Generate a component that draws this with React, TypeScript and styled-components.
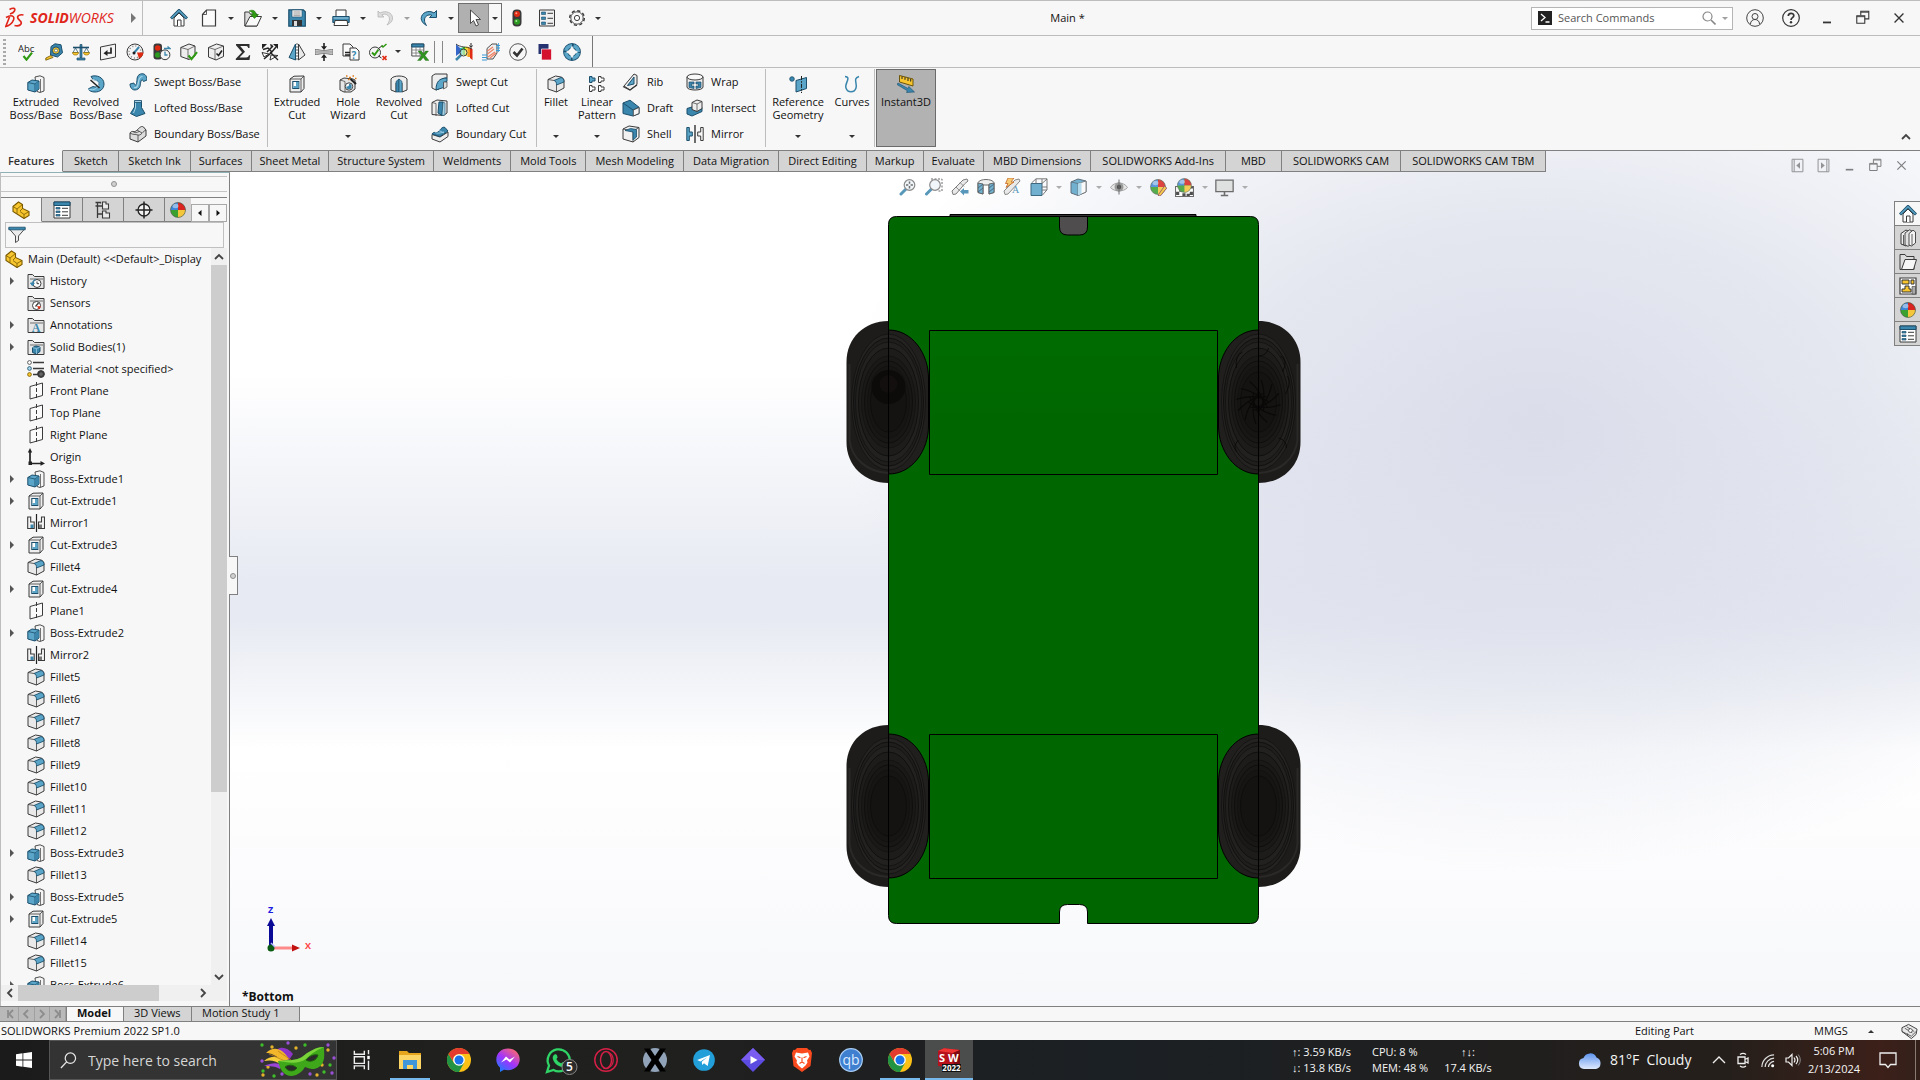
import React from 'react';
import styled, { createGlobalStyle, css } from 'styled-components';

/* ---------- palette ---------- */
const BL = '#5aa5c8';
const BM = '#3a86ad';
const BD = '#1c4f6c';
const BP = '#a8d4e8';
const K = '#3b3b3b';
const GN = '#2f9a12';
const YL = '#f7c52d';

const ui = `'Open Sans', 'Noto Sans', sans-serif`;

const Global = createGlobalStyle`
  * { box-sizing: border-box; }
  body { margin: 0; font: 11px/14px ${ui}; color: #111; background: #f7f7f7; overflow: hidden; }
  button, input { font: inherit; color: inherit; }
  button { border: 0; padding: 0; margin: 0; background: none; }
  ul { list-style: none; margin: 0; padding: 0; }
  h1 { font: inherit; margin: 0; }
`;

/* ---------- icon drawings, 18 x 18 ---------- */
const bigCheck = (x: number, y: number) => (
  <path d={`M${x} ${y} l3 3.6 l5.5 -7`} fill="none" stroke={GN} strokeWidth="2.2" />
);
const folderBack = (
  <>
    <path d="M1 16.500V2.500h4.500l2 2h9.500v12z" fill="#e6e6e6" stroke={K} />
    <path d="M3 7h13" stroke={K} strokeWidth=".7" />
  </>
);
const ball = (
  <>
    <circle cx="9" cy="9" r="7.500" fill="#3aa02f" />
    <path d="M9 9 V1.500 A7.500 7.500 0 0 0 1.500 9Z" fill="#3f86d8" />
    <path d="M9 9 V1.500 A7.500 7.500 0 0 1 16.500 9Z" fill="#d9241f" />
    <path d="M9 9 V16.500 A7.500 7.500 0 0 0 16.500 9Z" fill="#f3c63c" />
    <ellipse cx="6.500" cy="5" rx="3" ry="2.200" fill="#fff" opacity=".45" />
    <circle cx="9" cy="9" r="7.500" fill="none" stroke="#555" strokeWidth=".6" />
  </>
);
const glass = (dx = 0) => (
  <>
    <path d={`M${7 + dx} 11 L${2 + dx} 16`} stroke={BM} strokeWidth="3" strokeLinecap="round" />
    <circle cx={10.5 + dx} cy="7" r="5.300" fill="#eef5f9" stroke="#777" strokeWidth="1.200" />
  </>
);

const art: Record<string, React.ReactNode> = {
  home: (
    <>
      <path d="M4 9v8h10V9L9 4z" fill="#fff" stroke={K} />
      <path d="M7.500 17v-6h3.500v6" fill="#fff" stroke={K} />
      <path d="M1 9.500 9 1.500l8 8" fill="none" stroke={BD} strokeWidth="3" />
      <path d="M1.500 9 9 1.700 16.500 9" fill="none" stroke={BL} strokeWidth="1.200" />
    </>
  ),
  page: (
    <>
      <path d="M2.500 5.500 6.500 1h9v16h-13z" fill="#fbfbfb" stroke={K} strokeWidth="1.200" />
      <path d="M2.500 5.500h4V1" fill="none" stroke={K} strokeWidth=".8" />
    </>
  ),
  open: (
    <>
      <path d="M.8 17V3h4l1.500 2H13v12z" fill="#dcdcdc" stroke={K} />
      <path d="M1 17 6 7.500h11.500L13 17z" fill="#fafafa" stroke={K} />
      <path d="M5 2c4-2 7 0 7 3.500h2.500l-4 4-4-4H9c0-2-2-3-4-3.500z" fill={GN} stroke="#1b6b08" strokeWidth=".5" />
    </>
  ),
  save: (
    <>
      <path d="M.8.800h14.500l2 2v14.400H.8z" fill={BM} stroke={BD} strokeWidth="1.200" />
      <path d="M4 1h10v7H4z" fill="#f3f3f3" stroke={BD} strokeWidth=".6" />
      <path d="M5.500 3h7M5.500 5h7M5.500 6.700h7" stroke="#777" strokeWidth=".7" />
      <path d="M4 11h10v6H4z" fill="#333" />
      <path d="M6 12h3v5H6z" fill="#ddd" />
    </>
  ),
  print: (
    <>
      <path d="M4 8V1h10v7" fill="#fff" stroke={K} />
      <path d="M.8 7.500h16.400v6H.8z" fill={BM} stroke={BD} />
      <path d="M1.500 9h15" stroke={BP} />
      <path d="M3 11.500h12l1 5H2z" fill="#fff" stroke={K} />
    </>
  ),
  undo: <path d="M2 2v6h6L5.800 5.800C9 4 13.500 6 13.500 10c0 2-1 4-2.500 6 4-2 5.500-4 5.500-7C16.500 3.500 9.500 1 4 4z" fill="#ddd" stroke="#b5b5b5" strokeWidth=".8" />,
  redo: <path d="M16.500 1.500v7h-7l2.300-2.300C8 5 4.500 7.500 4.500 11c0 2 .6 3.500 2 5.500C3 14.500 1.200 12 1.200 9.500 1.200 3.500 9 .500 14 4z" fill={BL} stroke={BD} />,
  cursor: <path d="M5.500 1v13.500l3-3 2.500 5.500 2.500-1.200L11 10.500h4.500z" fill="#fff" stroke={K} strokeWidth=".9" />,
  lights: (
    <>
      <rect x="4.500" y=".5" width="9" height="17" rx="4" fill="#3a3a3a" />
      <circle cx="9" cy="5" r="3" fill="#e02a12" />
      <circle cx="9" cy="12.700" r="3" fill="#2c9a20" />
      <circle cx="8.300" cy="4.300" r="1" fill="#ffa08a" />
      <circle cx="8.300" cy="12" r="1" fill="#a4e79a" />
    </>
  ),
  list: (
    <>
      <path d="M1.500 1h15v16h-15z" fill="#f0f0f0" stroke={K} />
      <path d="M3.500 3h4v2.500h-4zM3.500 8h4v2.500h-4zM3.500 13h4v2.500h-4z" fill={BM} stroke={BD} strokeWidth=".6" />
      <path d="M9.500 4.300h5.500M9.500 9.300h5.500M9.500 14.300h5.500" stroke={K} />
    </>
  ),
  gear: (
    <>
      <circle cx="9" cy="9" r="7.300" fill="none" stroke={K} strokeWidth="1.500" strokeDasharray="3.200 2.530" />
      <circle cx="9" cy="9" r="6.200" fill="#f7f7f7" stroke={K} strokeWidth=".9" />
      <circle cx="9" cy="9" r="2.600" fill="#fff" stroke={K} />
    </>
  ),
  abc: (
    <>
      <text x="0" y="8.500" fontSize="9.500" fontFamily="Open Sans, sans-serif" fill="#222">Abc</text>
      {bigCheck(5.5, 13)}
    </>
  ),
  tape: (
    <>
      <path d="M6 3.500 10 .8l6 1 1.500 8-5 4.200-7-2z" fill={BM} stroke={BD} />
      <circle cx="11" cy="7.500" r="3.600" fill={YL} stroke={BD} />
      <circle cx="11" cy="7.500" r="1.500" fill="#fff" stroke={BD} strokeWidth=".6" />
      <path d="M6 12.500.8 15v2.200L8 14.500z" fill={YL} stroke="#6b5200" strokeWidth=".8" />
    </>
  ),
  scales: (
    <>
      <path d="M8 1.500h2v13H8zM5 15h8v2H5z" fill={BM} stroke={BD} strokeWidth=".7" />
      <path d="M1 4.500h16" stroke={BD} strokeWidth="1.600" />
      <path d="M3.500 5 1 9.500h5zM14.500 5 12 9.500h5z" fill="none" stroke={BD} strokeWidth=".7" />
      <path d="M.3 9.500h6.400c-.5 2-1.500 2.500-3.200 2.500S.8 11.500.3 9.500zM11.300 9.500h6.400c-.5 2-1.500 2.500-3.200 2.500s-2.700-.5-3.200-2.500z" fill={YL} stroke="#806000" strokeWidth=".6" />
    </>
  ),
  section2: (
    <>
      <path d="M1.500 4 16.500 1v13l-15 3z" fill="#f4f4f4" stroke={K} />
      <path d="M12 4.500v5.500H7.500" fill="none" stroke="#222" strokeWidth="1.700" />
      <path d="M8.500 7v6L4.500 10.200z" fill="#222" />
    </>
  ),
  gauge: (
    <>
      <circle cx="9" cy="9" r="8" fill="#f4f4f4" stroke={K} />
      <circle cx="9" cy="9" r="6" fill="none" stroke="#888" strokeWidth="1.500" strokeDasharray="1 2.100" />
      <path d="M11 9.500h6.500A8 8 0 0 1 13 15.500z" fill="#e02a12" />
      <path d="M13 4 7.500 10.500" stroke={BM} strokeWidth="2" />
      <circle cx="8" cy="10" r="1.500" fill="#222" />
    </>
  ),
  lightsClock: (
    <>
      <rect x=".5" y=".5" width="8.500" height="16" rx="3" fill="#3a3a3a" />
      <circle cx="4.700" cy="5" r="2.800" fill="#e02a12" />
      <circle cx="4.700" cy="12" r="2.800" fill="#2c9a20" />
      <circle cx="12" cy="11.800" r="4.900" fill="#f5f5f5" stroke={K} />
      <path d="M12 8.500v3.500h2.500" fill="none" stroke={BM} strokeWidth="1.300" />
      <path d="M11 5.500h6l-2.500-2" fill="none" stroke={BM} strokeWidth="1.400" />
    </>
  ),
  boxCheck: (
    <>
      <path d="M.8 4.500 9 1l6 2v10l-6 3.500-8.200-3z" fill="#eee" stroke={K} />
      <path d="M.8 4.500 8 6.500 15 3M8 6.500v10" fill="none" stroke={K} strokeWidth=".7" />
      {bigCheck(8.5, 12.5)}
    </>
  ),
  boxTick: (
    <>
      <path d="M1.500 4.500 9.500 1l7 2v10.500L9 17l-7.500-3z" fill="#eee" stroke={K} />
      <path d="M1.500 4.500 8 6.500 16.500 3M8 6.500V17" fill="none" stroke={K} strokeWidth=".7" />
      <path d="M9.500 10.500 11.500 12.500l3.500-5" fill="none" stroke="#222" strokeWidth="1.600" />
    </>
  ),
  sigma: <path d="M2 1h13.500v4h-1.300c-.3-1.500-1-1.900-2.500-1.900H6.200L11 8.800 5.500 14.500h6.700c1.500 0 2.200-.5 2.800-2.200h1.200L15.500 17H1.800v-1.200L8 9.300 2 2.200z" fill="#2e2e2e" />,
  xyz: (
    <>
      <path d="M2 6.500 7 5l4 4M6 9l6-6M3 16l7-6 5-6" stroke="#222" strokeWidth="1.500" fill="none" />
      <path d="M1 1h5L1 6zM17 1v5l-5-5zM9 1l3 1-2 2.500z" fill="#222" />
      <path d="M1 9.500l7 1.500-5 3zM17 12.500 9 17l1-5z" fill="#fafafa" stroke="#222" strokeWidth=".9" />
      <path d="M9 9l8 8" stroke="#222" strokeWidth="1.300" />
    </>
  ),
  sail: (
    <>
      <path d="M7.500 1v16L1 14.500z" fill={BL} stroke={BD} />
      <path d="M10.500 1v16l6.500-5z" fill="#e9e9e9" stroke={K} />
      <path d="M9 0v18" stroke={K} strokeWidth=".8" strokeDasharray="2 1" />
    </>
  ),
  squeeze: (
    <>
      <path d="M0 6.500c5 0 5 1 9 1s4-1 9-1v5c-5 0-5-1-9-1s-4 1-9 1z" fill="#d2d2d2" stroke="#666" strokeWidth=".8" />
      <path d="M0 8.300h18M0 9.800h18" stroke="#888" strokeWidth=".6" />
      <path d="M9 0v4M9 18v-4" stroke="#222" strokeWidth="1.600" />
      <path d="M6 3.200h6L9 7zM6 14.800h6L9 11z" fill="#222" />
    </>
  ),
  docQ: (
    <>
      <path d="M1 1h7l3 3v9H1z" fill="#fafafa" stroke={K} />
      <path d="M8 5h6l3 3v9H8z" fill="#fafafa" stroke={K} />
      <path d="M3 9.500h5M3 12h5" stroke="#222" strokeWidth="1.300" />
      <text x="9.500" y="15.500" fontSize="10" fontWeight="700" fontFamily="Open Sans, sans-serif" fill={BM}>?</text>
    </>
  ),
  verify: (
    <>
      <circle cx="6" cy="9.500" r="5.500" fill="#f4f4f4" stroke={K} />
      <path d="M3 9.500 5.500 12 9.500 6.500" fill="none" stroke={GN} strokeWidth="2" />
      <path d="M9.500 5.500 13.500 2.500M9.500 13l3 2" stroke="#222" />
      <path d="M12.500 2.500l1.500 1.500 3.500-3" fill="none" stroke={GN} strokeWidth="1.500" />
      <path d="M13.500 13l4 4m0-4-4 4" stroke="#e02a12" strokeWidth="1.700" />
    </>
  ),
  sheetX: (
    <>
      <path d="M.8 1h12v12H.8z" fill="#fff" stroke={K} strokeWidth=".9" />
      <path d="M.8 1h12v3H.8z" fill={BM} stroke={BD} />
      <path d="M1 7h12M1 10h12M5 4v9M9 4v9" stroke="#777" strokeWidth=".8" />
      <path d="M7 8h3.500l2 2.800L14.500 8h3l-3.500 4.500 4 5h-3.600l-2.200-3-2.400 3H6.500l4-5z" fill="#2f9420" stroke="#175c0c" strokeWidth=".3" />
    </>
  ),
  rainbow: (
    <>
      <path d="M1 1v12l4-3V5z" fill="#3566c9" />
      <path d="M5 5v7h2.500V4.500z" fill="#27b3b3" />
      <path d="M7.500 4v8H10V4z" fill="#3dba2b" />
      <path d="M10 4v9h2.500V3.500z" fill="#f4ea22" />
      <path d="M12.500 3.500V14H15V5z" fill="#f79a1e" />
      <path d="M15 5v10l2.500 2V6z" fill="#e02a12" />
      <path d="M1 1c5 4 10 2 16 5" fill="none" stroke="#222" strokeWidth=".8" />
      <path d="M16 0v4M14.500 2.500 16 4.500l1.500-2" fill="none" stroke="#222" />
      <path d="M6 12l-5 5" stroke={BM} strokeWidth="2.500" />
      <circle cx="8.500" cy="9.500" r="3.500" fill="#fff" fillOpacity=".5" stroke={K} />
    </>
  ),
  flow: (
    <>
      <path d="M5 5.500 10 1h5v9l-4 6H5z" fill="#eee" stroke={K} strokeWidth=".9" />
      <path d="M5.500 8 11 4M5.500 11 12 6M6 14l7-5M8 15l6-5" stroke="#ef7f63" strokeWidth="1.100" />
      <path d="M0 12h5M0 14.500h5M0 17h5M14 2.500h4M14 5h4M14 7.500h4" stroke="#3a9ad6" strokeWidth="1.100" />
      <path d="M16.500 0v9" stroke="#3a9ad6" strokeWidth=".8" />
    </>
  ),
  tickRound: (
    <>
      <circle cx="9" cy="9" r="8.300" fill="#f6f6f6" stroke="#555" />
      <path d="M4.500 9 8 12.500l5.500-7" fill="none" stroke="#333" strokeWidth="2.600" />
    </>
  ),
  swatches: (
    <>
      <path d="M2.500 1h10v10h-10z" fill="#26316f" />
      <path d="M5.500 6h10v11h-10z" fill="#d4122d" stroke="#f7f7f7" strokeWidth=".7" />
    </>
  ),
  wheel: (
    <>
      <circle cx="9" cy="9" r="6.200" fill="none" stroke={BD} strokeWidth="5.400" />
      <circle cx="9" cy="9" r="6.200" fill="none" stroke={BL} strokeWidth="3.600" strokeDasharray="8.200 1.540" strokeDashoffset="-.8" />
      <path d="M9 2.800l2.200 4L15.200 9l-4 2.200L9 15.200l-2.200-4L2.800 9l4-2.200z" fill="#f7f7f7" />
    </>
  ),
  extBoss: (
    <>
      <path d="M8 2 13 .8l4 1.700V16l-4 1.500-3-1z" fill="#f4f4f4" stroke={K} strokeWidth=".9" />
      <path d="M13.500 4v13" stroke={K} strokeWidth=".7" />
      <path d="M.8 7.500 5 5l7 1v8l-4 3-7.200-2z" fill={BL} stroke={BD} />
      <path d="M.8 7.500 8 9l4-3" fill="none" stroke={BD} strokeWidth=".8" />
      <path d="M8 9v8" stroke={BD} strokeWidth=".8" />
      <path d="M8.400 9.300 11.500 7v6.700L8.400 16z" fill={BM} />
    </>
  ),
  revBoss: (
    <>
      <path d="M4 1.500C9-.5 17 2 17 9c0 5-4 8-9 8-3 0-5.500-1-7-3l5-2.500c3 1 6 .5 6-2.500S9 5 6 4.500z" fill={BL} stroke={BD} />
      <path d="M6 4.500c3 .5 6 2.500 6 5M1 14c4 1.500 8 1 11-4" fill="none" stroke={BP} />
      <path d="M3.500 5 12.500 13" stroke="#222" strokeWidth="1.500" />
    </>
  ),
  swBoss: (
    <>
      <path d="M1 11c0 5 4 7.500 8 5 3-2 2-5 3-8 .5-1.500 2-1.500 2.500.5L18 7c0-5-3-7-6.500-6C7 2.500 8.500 7 7.500 10.500c-.5 2-2 2-2.500-.5z" fill={BL} stroke={BD} />
      <path d="M5 14.500c4 1 4-3 4.500-6s1.500-5 4-5" fill="none" stroke={BP} strokeWidth="1.200" />
    </>
  ),
  loftBoss: (
    <>
      <path d="M5.500 2v6l-4 6.500 6 3 8.500-3-3.500-6V2z" fill={BM} stroke={BD} />
      <path d="M6.500 3v6l-2 5" fill="none" stroke={BP} />
      <path d="M5.500 1.500h7v2h-7z" fill={BP} stroke={BD} strokeWidth=".8" />
    </>
  ),
  boundBoss: (
    <>
      <path d="M1 8c2-3 4-.5 6-2s5-6 7.500-4l2.500 3v6l-8 6-8-3z" fill="#ddd" stroke={K} />
      <path d="M1 8c3 2 5 1 8 2s5-4 8-5M9 10v7M4 6.500c2 2 4 1 6 0M8 5l5 3" fill="none" stroke={K} strokeWidth=".8" />
    </>
  ),
  extCut: (
    <>
      <path d="M2 4 6 1.200l10-.2v12.500L13 17H2z" fill="#eee" stroke={K} />
      <path d="M2 4h11v13M13 4l3-3" fill="none" stroke={K} strokeWidth=".8" />
      <path d="M4.800 6.500h6v7h-6z" fill="#fff" stroke={BD} strokeWidth="1.100" />
      <path d="M8 7h2.500v6H5.500v-2H8z" fill={BL} />
    </>
  ),
  hole: (
    <>
      <path d="M1 5 5 3l9 1 2 1v9l-4 3H5l-4-2z" fill="#e6e6e6" stroke={K} />
      <path d="M1 5l5 1.500V17" fill="none" stroke={K} strokeWidth=".7" />
      <circle cx="10" cy="11.500" r="3.700" fill="#fff" stroke={K} />
      <path d="M10 8.800a2.700 2.700 0 1 1-2.700 2.700c2 .5 3-.7 2.700-2.700z" fill={BM} />
      <path d="M11.500 4 17 9" stroke="#222" strokeWidth="2" />
      <path d="M10 2.500h2M7 1h1.500M9 4.500h1.500M13.500 1H15M16 3.500h1.500" stroke="#e07b1a" strokeWidth="1.500" />
    </>
  ),
  revCut: (
    <>
      <path d="M1 4c2-4 14-4 16 0v11l-5 2V8L9 11 6 8v9l-5-2z" fill="#eee" stroke={K} />
      <path d="M6 17V6.500L9 4v13z" fill={BM} stroke={BD} strokeWidth=".7" />
      <path d="M12 17V6.500L9 4v13z" fill={BL} stroke={BD} strokeWidth=".7" />
    </>
  ),
  swCut: (
    <>
      <path d="M1 3 4 1h12v4c-6 0-8 3-8 11l-3 1-4-2z" fill="#eee" stroke={K} />
      <path d="M5 17c0-8 3-12 11-12v3.500c-3 .5-3.500 2-3.500 6z" fill={BL} stroke={BD} />
      <path d="M12.500 9 16 9v5l-3.500 2z" fill="#ddd" stroke={K} strokeWidth=".7" />
    </>
  ),
  loftCut: (
    <>
      <path d="M1 3.500 6 1l10 1v12l-3.500 2.500L1 15.500z" fill="#eee" stroke={K} />
      <path d="M1 3.500l4 1V17" fill="none" stroke={K} strokeWidth=".7" />
      <path d="M8 3h4l-1 13.500L7 14z" fill={BM} stroke={BD} />
      <path d="M12 3l2 1v12l-3 .5z" fill={BP} stroke={BD} strokeWidth=".6" />
    </>
  ),
  boundCut: (
    <>
      <path d="M1 9.500 9 12l8-5v4.500l-8 5.500-8-3z" fill="#eee" stroke={K} />
      <path d="M1 9c2-3 4-.5 6-2s4-6 7-4.500L17 6l-8 5.500z" fill={BM} stroke={BD} />
      <path d="M4 7c2 2 5 1 9 0M8 5.500l5 2.500" fill="none" stroke={BP} strokeWidth=".8" />
    </>
  ),
  fillet: (
    <>
      <path d="M1 4.500 8.500 1 14 2c2 .6 3 2 3 4v7l-7.500 4L1 14z" fill="#e9e9e9" stroke={K} />
      <path d="M9.500 17V9.500" stroke={K} strokeWidth=".8" />
      <path d="M7 5.500 14 2.500c2 .6 3 2 3 4.500l-7.500 3C9.500 7.500 9 6 7 5.500z" fill={BL} stroke={BD} strokeWidth=".9" />
      <path d="M1 4.500 7 5.500" stroke={K} strokeWidth=".8" />
    </>
  ),
  pattern: (
    <>
      <path d="M1.500 1.500h2.500v1.500h3v3H4v1.500H1.500z" fill={BL} stroke={BD} />
      <path d="M10.500 1.500H13v1.500h3v3h-3v1.500h-2.500zM1.500 10.500H4V12h3v3H4v1.500H1.500zM10.500 10.500H13V12h3v3h-3v1.500h-2.500z" fill="#fff" stroke={K} />
    </>
  ),
  rib: (
    <>
      <path d="M2 13 12 1l3 1.500v9L8 17z" fill="#eee" stroke={K} />
      <path d="M5.500 12.500 12 4v7z" fill={BL} stroke={BD} />
      <path d="M1 13.500 8 17l7-5" fill="none" stroke={K} strokeWidth="1.200" />
    </>
  ),
  draft: (
    <>
      <path d="M1 4 8 1.200l9 7v6.500L11 17 1 14.500z" fill={BM} stroke={BD} />
      <path d="M1 4l10 7 6-2.800" fill="none" stroke={BD} />
      <path d="M11.300 11 17 8.500v6L11.300 17z" fill="#f4f4f4" stroke={K} strokeWidth=".8" />
    </>
  ),
  shell: (
    <>
      <path d="M1 4 7 1l10 1.500v10L11 17l-10-3z" fill="#f1f1f1" stroke={K} />
      <path d="M1 4l10 2 6-3.500M11 6v11" fill="none" stroke={K} strokeWidth=".8" />
      <path d="M3 5.500 8.500 3.500l6 1V12L11 15V7z" fill={BM} stroke={BD} strokeWidth=".8" />
    </>
  ),
  wrap: (
    <>
      <path d="M1 4v10c0 4 16 4 16 0V4z" fill="#eee" stroke={K} />
      <ellipse cx="9" cy="4" rx="8" ry="3" fill="#f8f8f8" stroke={K} />
      <path d="M3 9h5v2H5.500v2H8v2.500L3 14.500zM10 9h5v5.500l-5 1V13h2.500v-2H10z" fill={BM} stroke={BD} strokeWidth=".7" />
    </>
  ),
  intersect: (
    <>
      <path d="M1 9.500 9 7l7 1.500v4L6 17l-5-2z" fill={BM} stroke={BD} />
      <path d="M6 3.500 11 1l5 1.500v7l-5 3-5-2z" fill="#eee" stroke={K} />
      <path d="M6 3.500l5 1.500 5-2.500M11 5v7.500" fill="none" stroke={K} strokeWidth=".7" />
    </>
  ),
  mirror: (
    <>
      <path d="M9 0v18" stroke="#222" strokeWidth="1.300" />
      <path d="M.8 2.500h2.500v4.500h3v4h-3v4.500H.8z" fill={BL} stroke={BD} />
      <path d="M17.200 2.500h-2.500v4.500h-3v4h3v4.500h2.500z" fill="#f6f6f6" stroke={K} />
    </>
  ),
  refGeo: (
    <>
      <circle cx="3" cy="4" r="2.300" fill={BM} stroke={BD} strokeWidth=".8" />
      <path d="M7 5.500 17.500 2.500v11L7 17z" fill={BL} stroke={BD} />
      <path d="M12.500 1v17" stroke="#222" strokeDasharray="4 1.200 1.500 1.200" />
    </>
  ),
  curves: <path d="M2 1.500C9 2 1 9 3 13c1.500 5 8.500 5 10 0S9.500 3.500 16 1.500" fill="none" stroke={BM} strokeWidth="1.500" />,
  instant: (
    <>
      <path d="M2.500.5 16 4v7L2.500 7z" fill={YL} stroke="#5e4a00" strokeWidth=".9" />
      <path d="M5 1.500v2.500M8 2.300v2.500M11 3v3M13.700 4V6.500" stroke="#222" />
      <path d="M1 8l10 5.500.8-2L17.500 17l-8 .5.800-1.800L0 9.500z" fill={BM} stroke={BD} strokeWidth=".6" />
    </>
  ),
  zoomFit: (
    <>
      {glass()}
      <path d="M10.500 3.500v7M7 7h7" stroke="#555" strokeWidth="1.500" strokeDasharray="2.300 2.300" />
    </>
  ),
  zoomArea: (
    <>
      <path d="M6 1h11v12h-4" fill="none" stroke="#555" strokeDasharray="2 1.500" />
      {glass(-.5)}
    </>
  ),
  prevView: (
    <>
      <path d="M1 13 12 2l4-1 1 2-3.500 3L5 16l-3 .5z" fill="#e6e6e6" stroke="#666" />
      <path d="M9 4.500l4 4M5 9l4 4" stroke="#666" strokeWidth=".8" />
      <path d="M9 13.500 13 10v2h4.500v3.500H13v2z" fill={BM} />
    </>
  ),
  section: (
    <>
      <path d="M1 4.500C3 .5 15 .5 17 4.500v10l-5 1.500V7H6v9l-5-1.500z" fill="#ececec" stroke="#555" />
      <path d="M1 5l5 1v10l-5-1.500zM12 6l5-1v9.500L12 16z" fill={BL} stroke="#444" strokeWidth=".9" />
      <path d="M1 10l5-4M1 14l5-4M12 10l5-4M12 14l5-4" stroke="#2a5068" />
    </>
  ),
  annView: (
    <>
      <path d="M1 13 12 2l4-1 1 2-12 13-3 .5z" fill="#e6e6e6" stroke="#777" />
      <path d="M5 0h6L8 4h3L3 9.500 5 5.500H2.500z" fill="#f7c35a" stroke="#c05a10" strokeWidth=".9" />
      <text x="9" y="15" fontSize="10" fontFamily="Liberation Serif, serif" fill={BM}>A</text>
    </>
  ),
  orient: (
    <>
      <path d="M1 5.500h11v12H1z" fill={BL} stroke={BD} />
      <path d="M1.500 5 6 .8h11v11L12.500 17M12 5.500 17 1M6 1v4.500M12 1v4.500M12 9h5M12 12h5" fill="none" stroke="#555" strokeWidth=".9" />
    </>
  ),
  shaded: (
    <>
      <path d="M1 4 8 1l8 2v11l-8 3.500-7-2.500z" fill={BL} stroke="#456" />
      <path d="M8 5.500 16 3v11l-8 3.500z" fill="#fafafa" stroke="#555" strokeWidth=".8" />
      <path d="M8 5.500 11.500 4.400v11.400L8 17.500z" fill={BP} />
      <path d="M1 4l7 1.500" stroke="#456" strokeWidth=".8" />
    </>
  ),
  eye: (
    <>
      <path d="M.5 9.500C4 3.500 14 3.500 17.500 9.500 14 14 4 14 .5 9.500z" fill="#e4e4e4" stroke="#999" />
      <circle cx="9" cy="9" r="4.500" fill="#8a8a8a" />
      <circle cx="9" cy="9" r="2.200" fill="#333" />
      <path d="M9 1.500v15" stroke="#555" />
    </>
  ),
  appearance: (
    <>
      {ball}
      <path d="M9.500 16.500 15.500 8l2.300 2-6 7.500-2.500.5z" fill={YL} stroke="#735" strokeWidth=".8" />
    </>
  ),
  scene: (
    <>
      <path d="M.5 8h17v9.500H.5z" fill="#fff" stroke="#555" />
      <path d="M1 13h3v3H1zM14 13h3v3h-3zM4 10h3v3H4zM11 15h3v2h-3zM7 14.500h3v2.500H7zM14 8h3v2h-3z" fill="#333" />
      <g transform="translate(1,-.8) scale(.88)">{ball}</g>
    </>
  ),
  screen: (
    <>
      <path d="M.8 2h16.400v11H.8z" fill="#ddd" stroke="#555" strokeWidth="1.200" />
      <path d="M9 13v3M5.500 16.500h7" stroke="#555" strokeWidth="1.500" />
    </>
  ),
  part: (
    <>
      <path d="M1 5.500 6.500 1l4 2.500v4L17 10.500v4L12 17.500 1 10.500z" fill={YL} stroke="#7a5a00" strokeWidth="1.100" />
      <path d="M1 5.500l4 2.500 5.500-4.500M5 8v4.500M8 10l2.500-2.500M12 13.500 17 10.500M12 13.500v4M8 10.500l4 3" fill="none" stroke="#7a5a00" strokeWidth=".8" />
    </>
  ),
  props: (
    <>
      <path d="M1 1h16v16H1z" fill="#fff" stroke={K} />
      <path d="M1 1h16v3.500H1z" fill={BM} stroke={BD} />
      <path d="M3 6.500h4V8H3zM3 10h4v1.500H3zM3 13.500h4V15H3z" fill={BM} stroke={BD} strokeWidth=".7" />
      <path d="M9 7.300h6M9 10.800h6M9 14.300h6" stroke={K} />
    </>
  ),
  config: (
    <>
      <path d="M3.500 1v16M3.500 5h5M3.500 13h5M1.500 1.500h5v1M1.500 5h2" fill="none" stroke={K} strokeWidth="1.300" />
      <path d="M8.500 1H12v2h2.500v5h-6zM8.500 10H12v2h3.500v5h-7z" fill="#ececec" stroke={K} strokeWidth="1.100" />
    </>
  ),
  target: (
    <>
      <circle cx="9" cy="9" r="6" fill="#f3f3f3" stroke="#222" strokeWidth="1.300" />
      <path d="M9 .5v17M.5 9h17" stroke="#222" strokeWidth="1.500" />
    </>
  ),
  ball,
  funnel: (
    <>
      <path d="M1 2.500 7.500 10v6.500l3-2V10L17 2.500z" fill="#ececec" stroke={K} strokeWidth=".9" />
      <path d="M.8 1.200h16.400v2.600H.8z" fill={BM} stroke={BD} strokeWidth=".8" />
    </>
  ),
  fHistory: (
    <>
      {folderBack}
      <circle cx="10" cy="11.500" r="4" fill="#fff" stroke={K} />
      <path d="M10 9.500v2.200h2" fill="none" stroke={K} />
      <path d="M3.500 11h3.800L5.400 13.800zM5.500 11.500c0-2 1-3.500 3-4" fill={BM} stroke={BM} />
    </>
  ),
  fSensors: (
    <>
      {folderBack}
      <circle cx="9.500" cy="11.500" r="4" fill="#fff" stroke={K} />
      <path d="M10 12l4 .5-2 3z" fill="#e02a12" />
      <path d="M8.500 12.500l3-3.500" stroke={K} strokeWidth="1.300" />
    </>
  ),
  fNotes: (
    <>
      {folderBack}
      <text x="4.800" y="15.500" fontSize="12" fontWeight="700" fontFamily="Liberation Serif, serif" fill={BM}>A</text>
    </>
  ),
  fSolid: (
    <>
      {folderBack}
      <path d="M5.500 9.500 9 8l4 1v4.500L9.500 16l-4-1.500z" fill={BM} stroke={BD} />
      <path d="M5.500 9.500l4 1.200L13 9M9.500 10.700V16" fill="none" stroke={BP} strokeWidth=".7" />
    </>
  ),
  material: (
    <>
      <circle cx="2.500" cy="2.500" r="1.900" fill="#fff" stroke={K} strokeWidth=".8" />
      <circle cx="2.500" cy="8.500" r="1.900" fill={BP} stroke={BD} strokeWidth=".8" />
      <circle cx="2.500" cy="14.500" r="1.900" fill={YL} stroke="#7a5a00" strokeWidth=".8" />
      <path d="M6 2.500h11M6 8.500h11M6 14.500h5" stroke={K} strokeWidth="1.500" />
      <circle cx="14" cy="14" r="2.600" fill="none" stroke={K} strokeWidth="2.200" />
      <path d="M14 10v8M10 14h8" stroke={K} strokeWidth="1.100" />
    </>
  ),
  plane: (
    <>
      <path d="M3 4.500 15.500 1v12.500L3 17z" fill="#fbfbfb" stroke={K} />
      <path d="M9.500 0v18" stroke={K} strokeDasharray="4 2" />
    </>
  ),
  origin: (
    <>
      <path d="M3 3v12.500h11" fill="none" stroke="#222" strokeWidth="1.700" />
      <path d="M.8 4.500 3 0l2.200 4.500zM13.500 13l4.500 2.500-4.500 2.300z" fill="#222" />
      <path d="M1.500 13.500h3.500V17H1.500z" fill="#222" />
    </>
  ),
  mirrorTree: (
    <>
      <path d="M9.500 0v18" stroke="#222" strokeWidth="1.200" />
      <path d="M.7 3h3v5h3.500v6.500H.7zM17.500 3h-3v5h-3v6.500h6z" fill="#f4f4f4" stroke={K} strokeWidth="1.100" />
      <path d="M3.500 10.500h3v3.500h-3z" fill={BM} />
      <path d="M12 10.500h3v3.500h-3z" fill="#777" />
    </>
  ),
  library: (
    <>
      <path d="M2 4.500 7 1l3 1.500v12L7 17l-5-2z" fill="#ededed" stroke={K} />
      <path d="M6 4 10.500.8 13 2v12.500L9 17.300 6 16z" fill="#e2e2e2" stroke={K} strokeWidth=".9" />
      <path d="M10 4.500 14 1.200 16.500 3v11L12.500 17 10 16z" fill="#f4f4f4" stroke={K} strokeWidth=".9" />
      <path d="M13 5v11.500M4.500 6v10" stroke={K} strokeWidth=".8" />
    </>
  ),
  folder: (
    <>
      <path d="M1 16.500V1.500h5L7.500 3.500H15v13z" fill="#dcdcdc" stroke={K} />
      <path d="M2.500 16.500 6 6.500h11.500l-3 10z" fill="#f7f7f7" stroke={K} />
    </>
  ),
  palette: (
    <>
      <path d="M1 1h16v16H1z" fill="#fff" stroke={K} strokeWidth="1.200" />
      <path d="M3 3h7v4H3zM12 3h3v4h-3zM6 9h4v3h2v3H3v-3h3z" fill={YL} stroke="#333" />
      <path d="M13 9.500h3.500V17H13z" fill="#aaa" stroke={K} strokeWidth=".6" />
    </>
  ),
  tag: (
    <>
      <path d="M1 5 8 1.500l9 5-1 5.500-5 4.500L1 9z" fill="#e8e8e8" stroke={K} />
      <path d="M4 5.500l8 5M6 4l8 5M1 9l10 5M11 14l5-5M7 11v2.500" fill="none" stroke={K} strokeWidth=".8" />
      <circle cx="10" cy="8" r="2" fill="#fff" stroke={K} strokeWidth=".8" />
    </>
  ),
  user: (
    <>
      <circle cx="9" cy="9" r="8.300" fill="none" stroke="#444" />
      <circle cx="9" cy="7.500" r="3" fill="none" stroke="#444" />
      <path d="M4.500 15c0-6 9-6 9 0" fill="none" stroke="#444" />
    </>
  ),
  help: (
    <>
      <circle cx="9" cy="9" r="8.300" fill="none" stroke="#333" strokeWidth="1.200" />
      <path d="M6.300 7c0-3.500 5.500-3.500 5.500-.3C11.800 8.700 9 8.700 9 11" fill="none" stroke="#333" strokeWidth="1.700" />
      <circle cx="9" cy="13.300" r="1.200" fill="#333" />
    </>
  ),
  minimise: <path d="M4.500 14h9" stroke="#333" strokeWidth="2" />,
  restore: (
    <>
      <path d="M6.500 6V1.500h9V10H11" fill="none" stroke="#333" strokeWidth="1.200" />
      <path d="M2 6.500h9V15H2z" fill="none" stroke="#333" strokeWidth="1.200" />
      <path d="M6.500 2.500h9M2 7.500h9" stroke="#333" />
    </>
  ),
  close: <path d="M4 4l10 10M14 4 4 14" stroke="#333" strokeWidth="1.500" />,
  paneLeft: (
    <>
      <path d="M2.500 1.500h13v15h-13zM5 1.500v15" fill="none" stroke="#555" strokeWidth="1.200" />
      <path d="M12 5v8L7.500 9z" fill="#555" />
    </>
  ),
  paneRight: (
    <>
      <path d="M2.500 1.500h13v15h-13zM13 1.500v15" fill="none" stroke="#555" strokeWidth="1.200" />
      <path d="M6 5v8l4.500-4z" fill="#555" />
    </>
  ),
};

const Svg = styled.svg<{ $s?: number }>`
  display: block;
  flex: none;
  width: ${p => p.$s ?? 18}px;
  height: ${p => p.$s ?? 18}px;
`;
const Icon = ({ name, size }: { name: string; size?: number }) => (
  <Svg viewBox="0 0 18 18" $s={size} aria-hidden="true">{art[name]}</Svg>
);

/* ---------- shared ---------- */
const Caret = styled.span<{ $dim?: boolean }>`
  display: block;
  flex: none;
  border: 3px solid transparent;
  border-top-color: ${p => (p.$dim ? '#a0a0a0' : '#333')};
  border-bottom: 0;
`;
const Spacer = styled.span<{ $w: number }>`
  flex: none;
  width: ${p => p.$w}px;
`;
const IconButton = styled.button<{ $w: number }>`
  display: flex;
  align-items: center;
  justify-content: center;
  flex: none;
  width: ${p => p.$w}px;
  height: 100%;
`;

const Page = styled.div`
  display: flex;
  flex-direction: column;
  height: 100vh;
`;

/* ---------- title bar ---------- */
const TitleBar = styled.header`
  display: flex;
  align-items: center;
  flex: none;
  height: 36px;
  padding-right: 3px;
  border-top: 1px solid #bdbdbd;
  border-bottom: 1px solid #bdbdbd;
`;
const Brand = styled.div`
  display: flex;
  align-items: center;
  gap: 5px;
  width: 143px;
  height: 100%;
  padding-left: 5px;
  border-right: 1px solid #bdbdbd;
`;
const BrandMark = styled.svg`
  width: 20px;
  height: 22px;
  flex: none;
`;
const BrandName = styled.span`
  flex: 1;
  font-size: 14px;
  line-height: 20px;
  font-style: italic;
  color: #e0251b;
  b { font-weight: 700; }
`;
const BrandArrow = styled.span`
  border: 5px solid transparent;
  border-left-color: #777;
  border-right: 0;
  margin-right: 6px;
`;
const QuickBar = styled.div`
  display: flex;
  align-items: center;
  height: 100%;
  padding-left: 21px;
`;
const SelectTool = styled.div`
  display: flex;
  align-items: center;
  width: 44px;
  height: 30px;
  border: 1px solid #6e6e6e;
  > :first-child { background: #b0b0b0; border-right: 1px solid #8a8a8a; }
`;
const DocTitle = styled.h1`
  flex: 1;
  text-align: center;
`;
const SearchBox = styled.label`
  display: flex;
  align-items: center;
  width: 202px;
  height: 23px;
  padding: 0 4px 0 6px;
  gap: 6px;
  border: 1px solid #b5b5b5;
  background: #fff;
  margin-right: 4px;
  input {
    flex: 1;
    min-width: 0;
    border: 0;
    padding: 0;
    outline: 0;
    background: none;
    &::placeholder { color: #555; opacity: 1; }
  }
`;

/* ---------- tools row ---------- */
const ToolRow = styled.div`
  display: flex;
  flex: none;
  height: 32px;
  border-bottom: 1px solid #bdbdbd;
`;
const ToolSet = styled.div`
  display: flex;
  align-items: center;
  width: 593px;
  padding-left: 3px;
  border-right: 1px solid #777;
`;
const Grip = styled.span`
  width: 3px;
  height: 26px;
  margin-right: 7px;
  background: repeating-linear-gradient(#aaa 0 2px, transparent 2px 4px);
`;
const Bar = styled.span`
  width: 8px;
  height: 22px;
  border-left: 1px solid #888;
`;

/* ---------- ribbon ---------- */
const Ribbon = styled.div`
  display: flex;
  flex: none;
  height: 82px;
`;
const Group = styled.div`
  display: flex;
  margin: 1px 0 3px;
  border-right: 1px solid #bdbdbd;
`;
const Big = styled.button<{ $w: number; $on?: boolean }>`
  display: grid;
  grid-template-rows: 18px 26px 15px;
  row-gap: 2px;
  justify-items: center;
  align-content: start;
  width: ${p => p.$w}px;
  padding-top: 6px;
  line-height: 13px;
  white-space: pre-line;
  ${p => p.$on && css`
    margin: 1px 0 3px 1px;
    padding-top: 5px;
    border: 1px solid #6b6b6b;
    background: #b2b2b2;
  `}
  > ${Caret} { align-self: end; }
`;
const Stack = styled.div<{ $w: number }>`
  display: grid;
  grid-template-rows: repeat(3, 26px);
  width: ${p => p.$w}px;
  padding-left: 3px;
`;
const Small = styled.button`
  display: flex;
  align-items: center;
  gap: 7px;
  white-space: nowrap;
`;
const Collapse = styled.button`
  margin-left: auto;
  align-self: flex-end;
  width: 28px;
  height: 26px;
`;

/* ---------- workspace ---------- */
const Workspace = styled.main`
  flex: 1;
  min-height: 0;
  display: flex;
  flex-direction: column;
  background:
    radial-gradient(ellipse 36% 52% at 80% 32%, rgba(217, 220, 233, .95) 0%, rgba(222, 225, 236, .8) 45%, rgba(255, 255, 255, 0) 100%),
    linear-gradient(rgba(255, 255, 255, 0) 26%, rgba(225, 229, 239, .8) 50%, rgba(225, 229, 239, .8) 55%, rgba(255, 255, 255, 0) 70%, rgba(246, 247, 250, .9) 100%),
    #fff;
`;
const Tabs = styled.nav`
  display: flex;
  flex: none;
  height: 22px;
`;
const Tab = styled.button<{ $pad: number; $on?: boolean }>`
  flex: none;
  min-width: 56px;
  padding: 0 ${p => p.$pad}px;
  border: solid #808080;
  border-width: 1px 1px 1px 0;
  background: #d4d4d4;
  ${p => p.$on && css`
    background: #f7f7f7;
    border-top-color: #f7f7f7;
    border-bottom-color: #f7f7f7;
    font-weight: 600;
    color: #333;
  `}
`;
const DocControls = styled.div`
  display: flex;
  flex: 1;
  justify-content: flex-end;
  align-items: flex-end;
  padding-right: 6px;
  border-top: 1px solid #808080;
  > button { height: 14px; opacity: .6; }
`;
const Body = styled.div`
  display: flex;
  flex: 1;
  min-height: 0;
  border-bottom: 1px solid #808080;
`;

/* ---------- feature manager ---------- */
const Panel = styled.aside`
  position: relative;
  display: flex;
  flex-direction: column;
  flex: none;
  width: 230px;
  padding-right: 2px;
  background: #f7f7f7;
  border-top: 1px solid #8fb0b4;
  border-left: 1px solid #bdbdbd;
  border-right: 1px solid #808080;
`;
const Splitter = styled.div`
  display: flex;
  align-items: center;
  justify-content: center;
  flex: none;
  height: 16px;
  margin: 3px 0 5px;
  border: solid #c4c4c4;
  border-width: 1px 0;
`;
const Knob = styled.span`
  width: 6px;
  height: 6px;
  border: 1px solid #909090;
  border-radius: 50%;
  background: #d0d0d0;
`;
const PanelTabs = styled.div`
  display: flex;
  flex: none;
  height: 25px;
  border-top: 1px solid #808080;
`;
const PanelTab = styled.button<{ $on?: boolean }>`
  display: flex;
  align-items: center;
  justify-content: center;
  width: 41px;
  border-right: 1px solid #808080;
  border-bottom: 1px solid ${p => (p.$on ? '#f7f7f7' : '#808080')};
  background: ${p => (p.$on ? '#f7f7f7' : '#d4d4d4')};
  &:nth-child(5) { flex: 1; border-right: 0; }
`;
const TabScroll = styled.button`
  display: flex;
  align-items: center;
  justify-content: center;
  align-self: flex-end;
  width: 18px;
  height: 18px;
  border: 1px solid #a8a8a8;
  background: #f7f7f7;
`;
const Filter = styled.label`
  display: flex;
  align-items: center;
  gap: 4px;
  flex: none;
  height: 26px;
  margin: 0 3px 0 4px;
  padding-left: 2px;
  border: 1px solid #c0c0c0;
  input { flex: 1; min-width: 0; border: 0; background: none; outline: 0; padding: 0; }
`;
const TreeArea = styled.div`
  display: grid;
  grid-template-columns: 1fr 16px;
  flex: 1;
  min-height: 0;
`;
const Tree = styled.ul`
  overflow: hidden;
  min-width: 0;
`;
const Row = styled.li<{ $root?: boolean }>`
  display: flex;
  align-items: center;
  gap: 5px;
  height: 22px;
  padding-left: ${p => (p.$root ? 4 : 9)}px;
  white-space: nowrap;
`;
const Twist = styled.span<{ $show?: boolean }>`
  width: 12px;
  &::before {
    content: '';
    display: ${p => (p.$show ? 'block' : 'none')};
    width: 0;
    border: 4px solid transparent;
    border-left-color: #555;
    border-right: 0;
  }
`;
const VScroll = styled.div`
  display: flex;
  flex-direction: column;
  background: #f0f0f0;
  > button { height: 17px; }
`;
const HScroll = styled.div`
  display: flex;
  flex: none;
  height: 16px;
  margin-bottom: 5px;
  background: #f0f0f0;
  > button { width: 17px; }
`;
const Track = styled.div`
  flex: 1;
  display: flex;
  flex-direction: inherit;
`;
const Thumb = styled.span<{ $part: number }>`
  flex: 0 0 ${p => p.$part}%;
  background: #cdcdcd;
`;
const PaneHandle = styled.button`
  position: absolute;
  z-index: 2;
  left: 100%;
  top: 46%;
  width: 9px;
  height: 39px;
  display: flex;
  align-items: center;
  justify-content: center;
  border: 1px solid #808080;
  border-left: 0;
  background: #f7f7f7;
`;

/* ---------- viewport ---------- */
const Viewport = styled.section`
  position: relative;
  flex: 1;
  min-width: 0;
  display: flex;
  flex-direction: column;
`;
const Hud = styled.div`
  display: flex;
  align-items: center;
  justify-content: center;
  flex: none;
  height: 30px;
  margin-bottom: 12px;
  padding-right: 4px;
  opacity: .85;
`;
const Model = styled.svg`
  flex: 1;
  min-height: 0;
  width: 100%;
`;
const Foot = styled.div`
  flex: none;
  display: flex;
  align-items: flex-end;
  height: 82px;
  padding: 0 0 2px 12px;
  font-size: 12px;
  font-weight: 700;
  line-height: 14px;
`;
const Triad = styled.svg`
  position: absolute;
  left: 32px;
  bottom: 48px;
  width: 56px;
  height: 54px;
`;
const TaskPane = styled.div`
  position: absolute;
  right: 0;
  top: 29px;
  width: 26px;
  border: 1px solid #808080;
  border-right: 0;
  > button {
    width: 100%;
    height: 24px;
    background: #d4d4d4;
  }
  > button + button { border-top: 1px solid #808080; }
  > button:first-child { background: #f7f7f7; height: 23px; }
`;

/* ---------- bottom bars ---------- */
const SheetTabs = styled.nav`
  display: flex;
  flex: none;
  height: 15px;
  border-bottom: 1px solid #808080;
`;
const SheetNav = styled.div`
  display: flex;
  width: 67px;
  padding-left: 3px;
  background: #b9b9b9;
  border-right: 1px solid #808080;
  > button { flex: 1; border: 1px solid #a0a0a0; border-width: 0 1px 0 0; }
`;
const Sheet = styled.button<{ $w: number; $on?: boolean }>`
  width: ${p => p.$w}px;
  padding: 0 0 2px 10px;
  line-height: 12px;
  text-align: left;
  border-right: 1px solid #808080;
  background: ${p => (p.$on ? '#f7f7f7' : '#d4d4d4')};
  font-weight: ${p => (p.$on ? 700 : 400)};
`;
const Status = styled.footer`
  display: flex;
  align-items: center;
  flex: none;
  height: 18px;
  padding: 0 2px 0 1px;
  > :first-child { flex: 1; }
`;
const StatusCell = styled.span<{ $w: number }>`
  width: ${p => p.$w}px;
`;
const Up = styled.span`
  border: 3px solid transparent;
  border-bottom-color: #333;
  border-top: 0;
  margin-right: 27px;
`;

/* ---------- taskbar ---------- */
const Taskbar = styled.footer`
  display: flex;
  flex: none;
  height: 40px;
  color: #f5f5f5;
  background: linear-gradient(90deg, #1b1b1b, #20211e 25%, #1f1f1f 42%, #1b2024 58%, #1f1f1f 75%, #251f1b 90%, #3c2019 98%, #33201b);
`;
const TaskButton = styled.button<{ $run?: boolean; $on?: boolean }>`
  display: flex;
  align-items: center;
  justify-content: center;
  position: relative;
  width: 48px;
  height: 40px;
  margin-right: 1px;
  background: ${p => (p.$on ? '#4b4d4d' : 'none')};
  &::after {
    content: '';
    display: ${p => (p.$run ? 'block' : 'none')};
    position: absolute;
    left: ${p => (p.$on ? 0 : 4)}px;
    right: ${p => (p.$on ? 0 : 4)}px;
    bottom: 0;
    height: 2px;
    background: #76b9ed;
  }
`;
const TaskSearch = styled.label`
  display: flex;
  align-items: center;
  width: 288px;
  padding-left: 10px;
  gap: 11px;
  border: 1px solid #555;
  background: #333;
  font-size: 14px;
  input {
    flex: 1;
    min-width: 0;
    border: 0;
    padding: 0;
    background: none;
    outline: 0;
    &::placeholder { color: #d6d6d6; opacity: 1; }
  }
`;
const Mask = styled.svg`
  width: 76px;
  height: 38px;
  flex: none;
`;
const Tray = styled.div`
  display: flex;
  align-items: center;
  margin-left: auto;
`;
const Meter = styled.div<{ $w: number; $center?: boolean }>`
  width: ${p => p.$w}px;
  line-height: 16px;
  white-space: pre-line;
  text-align: ${p => (p.$center ? 'center' : 'left')};
`;
const Weather = styled.button`
  display: flex;
  align-items: center;
  gap: 8px;
  width: 129px;
  margin-left: 80px;
  font-size: 14px;
`;
const TrayButton = styled.button<{ $w: number }>`
  display: flex;
  align-items: center;
  justify-content: center;
  width: ${p => p.$w}px;
  height: 40px;
`;
const Clock = styled.button`
  width: 54px;
  line-height: 18px;
  white-space: pre-line;
`;
const ShowDesktop = styled.button`
  width: 5px;
  height: 40px;
  border-left: 1px solid #8a7a75;
`;

/* ---------- data ---------- */
const quick: [string, boolean, boolean?][] = [
  ['home', false], ['page', true], ['open', true], ['save', true], ['print', true], ['undo', true, true], ['redo', true],
];
const toolsA = ['abc', 'tape', 'scales', 'section2', 'gauge', 'lightsClock', 'boxCheck', 'boxTick', 'sigma', 'xyz', 'sail', 'squeeze', 'docQ', 'verify'];
const toolsB = ['rainbow', 'flow', 'tickRound', 'swatches', 'wheel'];
const tabs: [string, number][] = [
  ['Features', 8], ['Sketch', 8], ['Sketch Ink', 9], ['Surfaces', 8], ['Sheet Metal', 8], ['Structure System', 8],
  ['Weldments', 9], ['Mold Tools', 9], ['Mesh Modeling', 9], ['Data Migration', 9], ['Direct Editing', 9], ['Markup', 8],
  ['Evaluate', 8], ['MBD Dimensions', 9], ['SOLIDWORKS Add-Ins', 11], ['MBD', 8], ['SOLIDWORKS CAM', 11], ['SOLIDWORKS CAM TBM', 11],
];
const T = (label: string, icon: string, open = false) => ({ label, icon, open });
const tree = [
  T('History', 'fHistory', true), T('Sensors', 'fSensors'), T('Annotations', 'fNotes', true), T('Solid Bodies(1)', 'fSolid', true),
  T('Material <not specified>', 'material'), T('Front Plane', 'plane'), T('Top Plane', 'plane'), T('Right Plane', 'plane'),
  T('Origin', 'origin'), T('Boss-Extrude1', 'extBoss', true), T('Cut-Extrude1', 'extCut', true), T('Mirror1', 'mirrorTree'),
  T('Cut-Extrude3', 'extCut', true), T('Fillet4', 'fillet'), T('Cut-Extrude4', 'extCut', true), T('Plane1', 'plane'),
  T('Boss-Extrude2', 'extBoss', true), T('Mirror2', 'mirrorTree'),
  ...[5, 6, 7, 8, 9, 10, 11, 12].map(n => T(`Fillet${n}`, 'fillet')),
  T('Boss-Extrude3', 'extBoss', true), T('Fillet13', 'fillet'), T('Boss-Extrude5', 'extBoss', true), T('Cut-Extrude5', 'extCut', true),
  T('Fillet14', 'fillet'), T('Fillet15', 'fillet'), T('Boss-Extrude6', 'extBoss', true),
];

const BigTool = ({ icon, label, w, menu, on }: { icon: string; label: string; w: number; menu?: boolean; on?: boolean }) => (
  <Big $w={w} $on={on}>
    <Icon name={icon} />
    <span>{label}</span>
    {menu && <Caret />}
  </Big>
);
const SmallTools = ({ w, items }: { w: number; items: [string, string][] }) => (
  <Stack $w={w}>
    {items.map(([icon, label]) => (
      <Small key={label}><Icon name={icon} />{label}</Small>
    ))}
  </Stack>
);
const ArrowSvg = styled.svg`
  display: block;
  width: 10px;
  height: 10px;
  margin: auto;
`;
const Arrow = ({ d, color = '#444' }: { d: string; color?: string }) => (
  <ArrowSvg viewBox="0 0 10 10" aria-hidden="true">
    <path d={d} fill="none" stroke={color} strokeWidth="1.800" />
  </ArrowSvg>
);

/* ---------- 3D model ---------- */
const Wheel = ({ side, y, kind }: { side: 'l' | 'r'; y: number; kind: string }) => {
  const c = side === 'l' ? 890.5 : 1260.5;
  const s = side === 'l' ? 1 : -1;
  const rings = [[37, 68], [35, 64], [33, 60], [30, 54], [27, 46], [24, 41], [21, 36], [18, 30]];
  return (
    <g transform={`translate(${c} ${y}) scale(${s} 1)`}>
      <path d="M0-81C-24-81-42-64-42-40V40C-42 64-24 81 0 81z" fill="#1d1c1a" />
      <path d="M0-72C24-72 40-48 40-24V24C40 48 24 72 0 72z" fill="#201f1d" stroke="#000" />
      <path d="M-39-38V38C-37 56-22 70 0 71" fill="none" stroke="#2b2928" strokeWidth="2" />
      {rings.map(([rx, ry], i) => (
        <ellipse key={rx} rx={rx} ry={ry} fill={['#252322', '#1f1e1c', '#222120', '#1d1c1a', '#1a1917', '#181715', '#161513', '#141311'][i]} stroke={i % 2 ? '#0d0c0b' : '#111'} strokeWidth=".8" />
      ))}
      {kind === 'dome' && (
        <>
          <circle cy="-15" r="17" fill="#0d0b0a" />
          <circle cy="-18" r="9" fill="#120f0e" />
        </>
      )}
      {kind === 'spokes' && (
        <g fill="none" stroke="#0a0908" strokeWidth=".9">
          {[0, 30, 60, 90, 120, 150, 180, 210, 240, 270, 300, 330].map(a => (
            <path key={a} d="M-10 0C-4-4 8-6 22-2" transform={`rotate(${a}) scale(1 1.300)`} />
          ))}
          <path d="M-24-30q-6-12 2-16M22-34q2-12-6-16M-27-8q-6-10-2-18M-20 36q-8 2-8 10M20 38q6 6 2 12M0-46q-8 0-10-8" />
        </g>
      )}
      <path d="M0-81V81" stroke="#000" />
    </g>
  );
};

/* ---------- taskbar icons ---------- */
const Glyph = ({ children, size = 24 }: { children: React.ReactNode; size?: number }) => (
  <Svg viewBox="0 0 24 24" $s={size} aria-hidden="true">{children}</Svg>
);
const chrome = (
  <>
    <circle cx="12" cy="12" r="12" fill="#fbc116" />
    <path d="M1.600 6 7 15l5.200 3L12 24A12 12 0 0 1 1.600 6z" fill="#229342" />
    <path d="M12 12l5 3-5 9a12 12 0 0 1-5-1z" fill="#229342" />
    <path d="M1.600 6A12 12 0 0 1 22.400 6H12a6 6 0 0 0-5.500 8z" fill="#e33b2e" />
    <circle cx="12" cy="12" r="5.800" fill="#fff" />
    <circle cx="12" cy="12" r="4.500" fill="#1a73e8" />
  </>
);
const beads = [[2, 4, '#3dbd2a'], [12, 6, '#e3b32b'], [28, 2, '#9a4fd8'], [45, 4, '#3dbd2a'], [36, 7, '#e3b32b'], [68, 4, '#9a4fd8'], [74, 17, '#9a4fd8'], [2, 20, '#9a4fd8'], [3, 30, '#3dbd2a'], [8, 26, '#e3b32b'], [14, 35, '#3dbd2a'], [22, 33, '#9a4fd8'], [3, 34, '#e3b32b'], [50, 33, '#9a4fd8'], [57, 34, '#e3b32b'], [64, 31, '#3dbd2a'], [72, 32, '#9a4fd8'], [70, 24, '#3dbd2a'], [62, 24, '#e3b32b'], [68, 9, '#e3b32b']] as const;

export default function App() {
  return (
    <Page>
      <Global />
      <TitleBar>
        <Brand>
          <BrandMark viewBox="0 0 20 22" aria-hidden="true">
            <g fill="none" stroke="#e0251b" strokeWidth="1.600">
              <path d="M4.500 2.500C8 .5 11 1 9.500 4 8.500 5.800 6.500 6.500 5 7" />
              <path d="M1 10.500c5-3 9-2 7.500 2.500C7.300 16.500 3.500 19 .8 19.500L4.500 10" />
              <path d="M18.500 8C15 7 11.500 9 13 11.500s4.500 3 3 5.500c-1.200 2-4.500 2-6.500 1.500" />
            </g>
          </BrandMark>
          <BrandName><b>SOLID</b>WORKS</BrandName>
          <BrandArrow />
        </Brand>
        <QuickBar>
          {quick.map(([n, menu, dim]) => (
            <React.Fragment key={n}>
              <IconButton $w={30} aria-label={n}><Icon name={n} /></IconButton>
              {menu && <IconButton $w={14} aria-label={`${n} options`}><Caret $dim={dim} /></IconButton>}
            </React.Fragment>
          ))}
          <SelectTool>
            <IconButton $w={30} aria-label="Select"><Icon name="cursor" /></IconButton>
            <IconButton $w={12} aria-label="Select options"><Caret /></IconButton>
          </SelectTool>
          <IconButton $w={30} aria-label="Rebuild"><Icon name="lights" /></IconButton>
          <IconButton $w={30} aria-label="File properties"><Icon name="list" /></IconButton>
          <IconButton $w={30} aria-label="Options"><Icon name="gear" /></IconButton>
          <IconButton $w={12} aria-label="More options"><Caret /></IconButton>
        </QuickBar>
        <DocTitle>Main *</DocTitle>
        <SearchBox>
          <Svg viewBox="0 0 14 14" $s={14} aria-hidden="true">
            <path d="M0 0h14v14H0z" fill="#222" />
            <path d="M3 3l4 3.500L3 10M7.500 11h4" fill="none" stroke="#fff" strokeWidth="1.300" />
          </Svg>
          <input aria-label="Search Commands" placeholder="Search Commands" />
          <Svg viewBox="0 0 14 14" $s={14} aria-hidden="true">
            <circle cx="5.500" cy="5.500" r="4.500" fill="none" stroke="#888" strokeWidth="1.200" />
            <path d="M9 9l4.500 4.500" stroke="#888" strokeWidth="1.600" />
          </Svg>
          <Caret $dim />
        </SearchBox>
        {['user', 'help', 'minimise', 'restore', 'close'].map(n => (
          <IconButton $w={36} key={n} aria-label={n}><Icon name={n} size={n === 'user' || n === 'help' ? 18 : 16} /></IconButton>
        ))}
      </TitleBar>

      <ToolRow>
        <ToolSet>
          <Grip />
          {toolsA.map(n => <IconButton $w={27} key={n} aria-label={n}><Icon name={n} /></IconButton>)}
          <IconButton $w={14} aria-label="verify options"><Caret /></IconButton>
          <IconButton $w={29} aria-label="Export table"><Icon name="sheetX" /></IconButton>
          <Bar /><Bar />
          {toolsB.map(n => <IconButton $w={27} key={n} aria-label={n}><Icon name={n} /></IconButton>)}
        </ToolSet>
      </ToolRow>

      <Ribbon>
        <Group>
          <Spacer $w={6} />
          <BigTool icon="extBoss" label={'Extruded\nBoss/Base'} w={60} />
          <BigTool icon="revBoss" label={'Revolved\nBoss/Base'} w={60} />
          <SmallTools w={141} items={[['swBoss', 'Swept Boss/Base'], ['loftBoss', 'Lofted Boss/Base'], ['boundBoss', 'Boundary Boss/Base']]} />
        </Group>
        <Group>
          <BigTool icon="extCut" label={'Extruded\nCut'} w={58} />
          <BigTool icon="hole" label={'Hole\nWizard'} w={44} menu />
          <BigTool icon="revCut" label={'Revolved\nCut'} w={58} />
          <SmallTools w={108} items={[['swCut', 'Swept Cut'], ['loftCut', 'Lofted Cut'], ['boundCut', 'Boundary Cut']]} />
        </Group>
        <Group>
          <BigTool icon="fillet" label="Fillet" w={38} menu />
          <BigTool icon="pattern" label={'Linear\nPattern'} w={44} menu />
          <SmallTools w={64} items={[['rib', 'Rib'], ['draft', 'Draft'], ['shell', 'Shell']]} />
          <SmallTools w={82} items={[['wrap', 'Wrap'], ['intersect', 'Intersect'], ['mirror', 'Mirror']]} />
        </Group>
        <Group>
          <BigTool icon="refGeo" label={'Reference\nGeometry'} w={64} menu />
          <BigTool icon="curves" label="Curves" w={44} menu />
        </Group>
        <BigTool icon="instant" label="Instant3D" w={60} on />
        <Collapse aria-label="Collapse ribbon"><Arrow d="M1 7l4-4 4 4" /></Collapse>
      </Ribbon>

      <Workspace>
        <Tabs>
          {tabs.map(([t, pad], i) => <Tab key={t} $pad={pad} $on={i === 0}>{t}</Tab>)}
          <DocControls>
            {['paneLeft', 'paneRight', 'minimise', 'restore', 'close'].map(n => (
              <IconButton $w={26} key={n} aria-label={`document ${n}`}><Icon name={n} size={15} /></IconButton>
            ))}
          </DocControls>
        </Tabs>
        <Body>
          <Panel>
            <Splitter><Knob /></Splitter>
            <PanelTabs>
              {['part', 'props', 'config', 'target', 'ball'].map((n, i) => (
                <PanelTab key={n} $on={i === 0} aria-label={n}><Icon name={n} /></PanelTab>
              ))}
              <TabScroll aria-label="Previous tab"><Svg viewBox="0 0 8 8" $s={8}><path d="M5.500 1v6L2 4z" fill="#111" /></Svg></TabScroll>
              <TabScroll aria-label="Next tab"><Svg viewBox="0 0 8 8" $s={8}><path d="M2.500 1v6L6 4z" fill="#111" /></Svg></TabScroll>
            </PanelTabs>
            <Filter><Icon name="funnel" /><input aria-label="Filter features" /></Filter>
            <TreeArea>
              <Tree>
                <Row $root><Icon name="part" />Main (Default) &lt;&lt;Default&gt;_Display</Row>
                {tree.map(r => (
                  <Row key={r.label}>
                    <Twist $show={r.open} />
                    <Icon name={r.icon} />
                    {r.label}
                  </Row>
                ))}
              </Tree>
              <VScroll>
                <button aria-label="Scroll up"><Arrow d="M1 7l4-4 4 4" /></button>
                <Track><Thumb $part={75} /></Track>
                <button aria-label="Scroll down"><Arrow d="M1 3l4 4 4-4" /></button>
              </VScroll>
            </TreeArea>
            <HScroll>
              <button aria-label="Scroll left"><Arrow d="M7 1 3 5l4 4" /></button>
              <Track><Thumb $part={80} /></Track>
              <button aria-label="Scroll right"><Arrow d="M3 1l4 4-4 4" /></button>
              <Spacer $w={16} />
            </HScroll>
            <PaneHandle aria-label="Hide panel"><Knob /></PaneHandle>
          </Panel>

          <Viewport>
            <Hud>
              {['zoomFit', 'zoomArea', 'prevView', 'section', 'annView'].map(n => <IconButton $w={26} key={n} aria-label={n}><Icon name={n} /></IconButton>)}
              {['orient', 'shaded', 'eye'].map(n => (
                <React.Fragment key={n}>
                  <IconButton $w={27} aria-label={n}><Icon name={n} /></IconButton>
                  <IconButton $w={13} aria-label={`${n} options`}><Caret $dim /></IconButton>
                </React.Fragment>
              ))}
              <IconButton $w={26} aria-label="Edit appearance"><Icon name="appearance" /></IconButton>
              {['scene', 'screen'].map(n => (
                <React.Fragment key={n}>
                  <IconButton $w={27} aria-label={n}><Icon name={n} size={19} /></IconButton>
                  <IconButton $w={13} aria-label={`${n} options`}><Caret $dim /></IconButton>
                </React.Fragment>
              ))}
            </Hud>
            <Model viewBox="850 214 454 710" role="img" aria-label="Bottom view of the car body">
              <defs>
                <linearGradient id="pan" x1="0" y1="0" x2="0" y2="1">
                  <stop offset="0" stopColor="#006c00" />
                  <stop offset=".2" stopColor="#006600" />
                </linearGradient>
              </defs>
              <path d="M952 214.500h246v2H952z" fill="#333" stroke="#000" />
              <path d="M898.500 216.500h354q8 0 8 8v691q0 8-8 8H1089.500V912q0-7.500-8-7.500h-12q-8 0-8 7.500v11.500H898.500q-8 0-8-8v-691q0-8 8-8z" fill="#006600" stroke="#000" />
              <path d="M1061.500 216.500h28V227q0 8-8 8h-12q-8 0-8-8z" fill="#4f4d4d" stroke="#000" />
              <path d="M931.500 330.500h288v144h-288zM931.500 734.500h288v144h-288z" fill="url(#pan)" stroke="#000" />
              <Wheel side="l" y={402} kind="dome" />
              <Wheel side="r" y={402} kind="spokes" />
              <Wheel side="l" y={806} kind="plain" />
              <Wheel side="r" y={806} kind="plain" />
            </Model>
            <Foot>*Bottom</Foot>
            <Triad viewBox="0 0 56 54" aria-label="Orientation triad">
              <text x="6" y="9" fontSize="9" fontWeight="700" fontFamily="Open Sans, sans-serif" fill="#1a1ae0">Z</text>
              <text x="43" y="45" fontSize="9" fontWeight="700" fontFamily="Open Sans, sans-serif" fill="#ff4545">X</text>
              <path d="M11 44h22" stroke="#ff8a8a" strokeWidth="3" />
              <path d="M30 40.500 38 44l-8 3.500z" fill="#c01010" />
              <path d="M9 22v20" stroke="#0a0a96" strokeWidth="4" />
              <path d="M5 22 9 14l4 8z" fill="#0a0a96" />
              <circle cx="9" cy="44" r="3.500" fill="#0a5a14" />
              <path d="M9 39l4 4" stroke="#b9b9ff" strokeWidth="1.500" />
            </Triad>
            <TaskPane>
              {['home', 'library', 'folder', 'palette', 'ball', 'props'].map(n => (
                <IconButton $w={25} key={n} aria-label={`${n} pane`}><Icon name={n} /></IconButton>
              ))}
            </TaskPane>
          </Viewport>
        </Body>
      </Workspace>

      <SheetTabs>
        <SheetNav>
          {['M3 1v8M8 1 4 5l4 4', 'M7 1 3 5l4 4', 'M3 1l4 4-4 4', 'M7 1v8M2 1l4 4-4 4'].map((d, i) => (
            <button key={d} aria-label={`sheet scroll ${i + 1}`}><Arrow d={d} color="#8d8d8d" /></button>
          ))}
        </SheetNav>
        <Sheet $w={57} $on>Model</Sheet>
        <Sheet $w={68}>3D Views</Sheet>
        <Sheet $w={108}>Motion Study 1</Sheet>
      </SheetTabs>
      <Status>
        <span>SOLIDWORKS Premium 2022 SP1.0</span>
        <StatusCell $w={179}>Editing Part</StatusCell>
        <StatusCell $w={54}>MMGS</StatusCell>
        <Up />
        <Icon name="tag" size={17} />
      </Status>

      <Taskbar>
        <TaskButton aria-label="Start">
          <Svg viewBox="0 0 16 16" $s={16}><path d="M0 2.300 6.500 1.300v6.200H0zM7.300 1.200 16 0v7.500H7.300zM0 8.400h6.500v6.300L0 13.700zM7.300 8.400H16V16l-8.700-1.200z" fill="#fff" /></Svg>
        </TaskButton>
        <TaskSearch>
          <Svg viewBox="0 0 18 18" $s={17} aria-hidden="true">
            <circle cx="11" cy="6.500" r="5.500" fill="none" stroke="#e6e6e6" strokeWidth="1.300" />
            <path d="M7 10.500 1 17" stroke="#e6e6e6" strokeWidth="1.400" />
          </Svg>
          <input aria-label="Type here to search" placeholder="Type here to search" />
          <Mask viewBox="0 0 76 38" aria-hidden="true">
            {beads.map(([x, y, c]) => <circle key={`${x}-${y}`} cx={x} cy={y} r="1.700" fill={c} />)}
            <path d="M14 14C16 5 26 4 33 13l-4 6z" fill="#8e35c9" />
            <path d="M6 12c8-8 17-4 23 6l-6 3C16 14 11 12 6 12z" fill="#f2b62b" />
            <path d="M4 20c7-6 14-5 20-1l-3 5c-6-5-11-5-17-4z" fill="#f6cd3c" />
            <path d="M18 10l13 9M9 13l16 7" stroke="#b97e10" strokeWidth=".8" />
            <path d="M4 25c8-4 15-3 18-1l-2 4c-5-3-10-3-16-3z" fill="#9a45d6" />
            <path d="M18 20C26 19 36 20 42 16c6-5 14-10 22-10 0 7 2 15-5 20-6 4-11 1-14 0-3 5-7 8-13 9-9 0-12-7-14-15z" fill="#3ea81a" />
            <path d="M18 20C26 19 36 20 42 16c6-5 14-10 22-10-7 3-12 6-18 12-8 6-20 3-28 2z" fill="#7bd33a" />
            <path d="M25 26c4-3 9-2 12 1-3 4-9 4-12-1zM46 19c3-4 8-6 12-5-1 5-7 8-12 5z" fill="#2a2a2a" stroke="#1d5f0c" />
          </Mask>
        </TaskSearch>
        <TaskButton aria-label="Task view">
          <Glyph size={20}>
            <path d="M4 1v4h12V1M4 23v-4h12v4M4 8h12v8H4zM21 0v5M21 13v11" fill="none" stroke="#eee" strokeWidth="1.700" />
            <path d="M19.500 7h3v4h-3z" fill="#fff" />
          </Glyph>
        </TaskButton>
        <TaskButton $run aria-label="File Explorer">
          <Glyph>
            <path d="M1 3h8l2 2h12v16H1z" fill="#e5a51c" />
            <path d="M1 7h22v14H1z" fill="#fcd567" />
            <path d="M5 21v-9h14v9h-4v-4H9v4z" fill="#3f96d8" />
          </Glyph>
        </TaskButton>
        <TaskButton aria-label="Chrome"><Glyph>{chrome}</Glyph></TaskButton>
        <TaskButton aria-label="Messenger">
          <Glyph>
            <defs><linearGradient id="msg" x1=".1" y1="1" x2=".8" y2="0"><stop offset="0" stopColor="#0a84ff" /><stop offset=".5" stopColor="#a033ff" /><stop offset="1" stopColor="#ff6a6a" /></linearGradient></defs>
            <path d="M12 .500C5.300.500.300 5.300.300 11.500c0 3.400 1.500 6.200 3.700 8.100V24l4-2.300c1.200.3 2.600.5 4 .5 6.700 0 11.700-4.700 11.700-10.900S18.700.500 12 .500z" fill="url(#msg)" />
            <path d="M5 14.500 10 8.500l3.500 3 5.500-3-5 6-3.500-3z" fill="#fff" />
          </Glyph>
        </TaskButton>
        <TaskButton aria-label="WhatsApp">
          <Svg viewBox="-8 -8 42 42" $s={42} aria-hidden="true">
            <path d="M3 25 5 18.500A11 11 0 1 1 9.500 23z" fill="none" stroke="#2fd366" strokeWidth="2.300" />
            <path d="M10.500 7.500c2-1 2.500.5 3 2.500.3 1-1.300 1.500-1 2.200 1 2 2.500 3.300 4.500 4 .8.300 1.300-1.500 2.200-1.200 2 .7 3 1.200 2.300 2.800-.8 2-3.500 2.500-6 1.500-3.500-1.500-6-4.300-6.700-7.500-.3-1.800.3-3.500 1.700-4.300z" fill="#2fd366" />
            <circle cx="25.500" cy="20" r="7.500" fill="#2b2b2b" stroke="#888" />
            <text x="25.500" y="24.300" fontSize="12" textAnchor="middle" fontWeight="600" fontFamily="Open Sans, sans-serif" fill="#fff">5</text>
          </Svg>
        </TaskButton>
        <TaskButton aria-label="Opera">
          <Glyph><circle cx="12" cy="12" r="11.200" fill="none" stroke="#d41f46" strokeWidth="1.500" /><ellipse cx="12" cy="12" rx="5.500" ry="8.500" fill="none" stroke="#d41f46" strokeWidth="1.500" /><path d="M14 4c7 3 7 13 0 16" fill="none" stroke="#d41f46" strokeWidth="1.200" /></Glyph>
        </TaskButton>
        <TaskButton aria-label="X app">
          <Glyph><circle cx="12" cy="12" r="12" fill="#91a3b8" /><path d="M1 .500h6L12 8l5-7.500h6L15.500 12 23 23.500h-6L12 16l-5 7.500H1L8.500 12z" fill="#000" /></Glyph>
        </TaskButton>
        <TaskButton aria-label="Telegram">
          <Glyph size={22}><circle cx="12" cy="12" r="11.800" fill="#229ed9" /><path d="M4.500 12 18.500 6.500 16 18.500l-4-3-2 2-.5-3.500 6-5-7.500 4.500z" fill="#fff" /></Glyph>
        </TaskButton>
        <TaskButton aria-label="Stremio">
          <Glyph><path d="M12 0 24 12 12 24 0 12z" fill="#5b4be0" /><path d="M12 0 24 12H0z" fill="#7a5cf0" /><path d="M9.500 8l7 4-7 4z" fill="#fff" /></Glyph>
        </TaskButton>
        <TaskButton aria-label="Brave">
          <Glyph>
            <path d="M7 0h10l2 2 1.500-.3L22 5l-1.500 13L12 24 3.500 18 2 5l1.500-3.300L5 2z" fill="#fb4a1e" />
            <path d="M6 4.500l6 1 6-1 1.500 4-2.500 4 .5 2-2 3L12 20.500 8.500 17.500l-2-3 .5-2-2.500-4z" fill="#fff" />
            <path d="M7.500 8.500l3 1.200M16.500 8.500l-3 1.200M12 9.500v4.500M9.500 15.500 12 14l2.500 1.500" stroke="#fb4a1e" strokeWidth="1.200" fill="none" />
          </Glyph>
        </TaskButton>
        <TaskButton aria-label="qBittorrent">
          <Glyph><circle cx="12" cy="12" r="11.300" fill="#3f7fd0" stroke="#a8cdf5" strokeWidth="1.200" /><text x="12" y="16.500" textAnchor="middle" fontSize="14" fontFamily="Open Sans, sans-serif" fill="#dcecff">qb</text></Glyph>
        </TaskButton>
        <TaskButton $run aria-label="Chrome window"><Glyph>{chrome}</Glyph></TaskButton>
        <TaskButton $run $on aria-label="SOLIDWORKS 2022">
          <Glyph>
            <path d="M1 3 7 .300 23 2v15l-6 3L1 18z" fill="#b5121b" />
            <path d="M1 3 7 .300 23 2l-7 3z" fill="#ef3434" />
            <path d="M16 5 23 2v15l-6 3z" fill="#7f0a12" />
            <text x="2" y="14" fontSize="11" fontWeight="700" fontFamily="Open Sans, sans-serif" fill="#fff">S</text>
            <text x="11" y="14" fontSize="11" fontWeight="700" fontFamily="Open Sans, sans-serif" fill="#fff">W</text>
            <path d="M5 16h19v8H5z" fill="#111" />
            <text x="14.500" y="23" textAnchor="middle" fontSize="8" fontWeight="700" fontFamily="Open Sans, sans-serif" fill="#fff">2022</text>
          </Glyph>
        </TaskButton>
        <Tray>
          <Meter $w={80}>{'↑: 3.59 KB/s\n↓: 13.8 KB/s'}</Meter>
          <Meter $w={66}>{'CPU: 8 %\nMEM: 48 %'}</Meter>
          <Meter $w={60} $center>{'↑↓:\n17.4 KB/s'}</Meter>
          <Weather>
            <Glyph>
              <defs><linearGradient id="cld" x1="0" y1="0" x2="0" y2="1"><stop offset="0" stopColor="#5f95ee" /><stop offset="1" stopColor="#dfeafc" /></linearGradient></defs>
              <path d="M6 21a5.500 5.500 0 0 1-.5-10.900A7 7 0 0 1 18.500 9.500 6 6 0 0 1 18 21z" fill="url(#cld)" />
            </Glyph>
            <span>81°F&nbsp; Cloudy</span>
          </Weather>
          <TrayButton $w={24} aria-label="Hidden icons"><Svg viewBox="0 0 14 14" $s={14}><path d="M1 10l6-6 6 6" fill="none" stroke="#eee" strokeWidth="1.400" /></Svg></TrayButton>
          <TrayButton $w={24} aria-label="Meet now"><Svg viewBox="0 0 16 16" $s={16}><path d="M3 5h7v6.500H3zM10 7.500l3-1.500v5l-3-1.500M5 2.500c2-1.500 4-1.500 6 0M5 14c2 1.500 4 1.500 6 0" fill="none" stroke="#eee" strokeWidth="1.300" /></Svg></TrayButton>
          <TrayButton $w={24} aria-label="Network"><Svg viewBox="0 0 16 16" $s={15}><path d="M2 15C2 8 8 2 15 2M5.500 15C5.500 10 10 5.500 15 5.500M9 15c0-3 3-6 6-6" fill="none" stroke="#ddd" strokeWidth="1.300" /><circle cx="13.500" cy="13.500" r="1.600" fill="#fff" /></Svg></TrayButton>
          <TrayButton $w={28} aria-label="Volume"><Svg viewBox="0 0 16 16" $s={16}><path d="M1 6h2.500L7 2.500v11L3.500 10H1z" fill="none" stroke="#eee" strokeWidth="1.200" /><path d="M9 5.500q2 2.500 0 5M11 4q3.500 4 0 8" fill="none" stroke="#eee" strokeWidth="1.200" /><path d="M13.300 2.500q4 5.500 0 11" fill="none" stroke="#888" /></Svg></TrayButton>
          <Clock>{'5:06 PM\n2/13/2024'}</Clock>
          <TrayButton $w={54} aria-label="Notifications"><Svg viewBox="0 0 18 18" $s={18}><path d="M1 2h16v11.500h-5.500L9 16.500l-2.500-3H1z" fill="none" stroke="#eee" strokeWidth="1.300" /></Svg></TrayButton>
          <ShowDesktop aria-label="Show desktop" />
        </Tray>
      </Taskbar>
    </Page>
  );
}
